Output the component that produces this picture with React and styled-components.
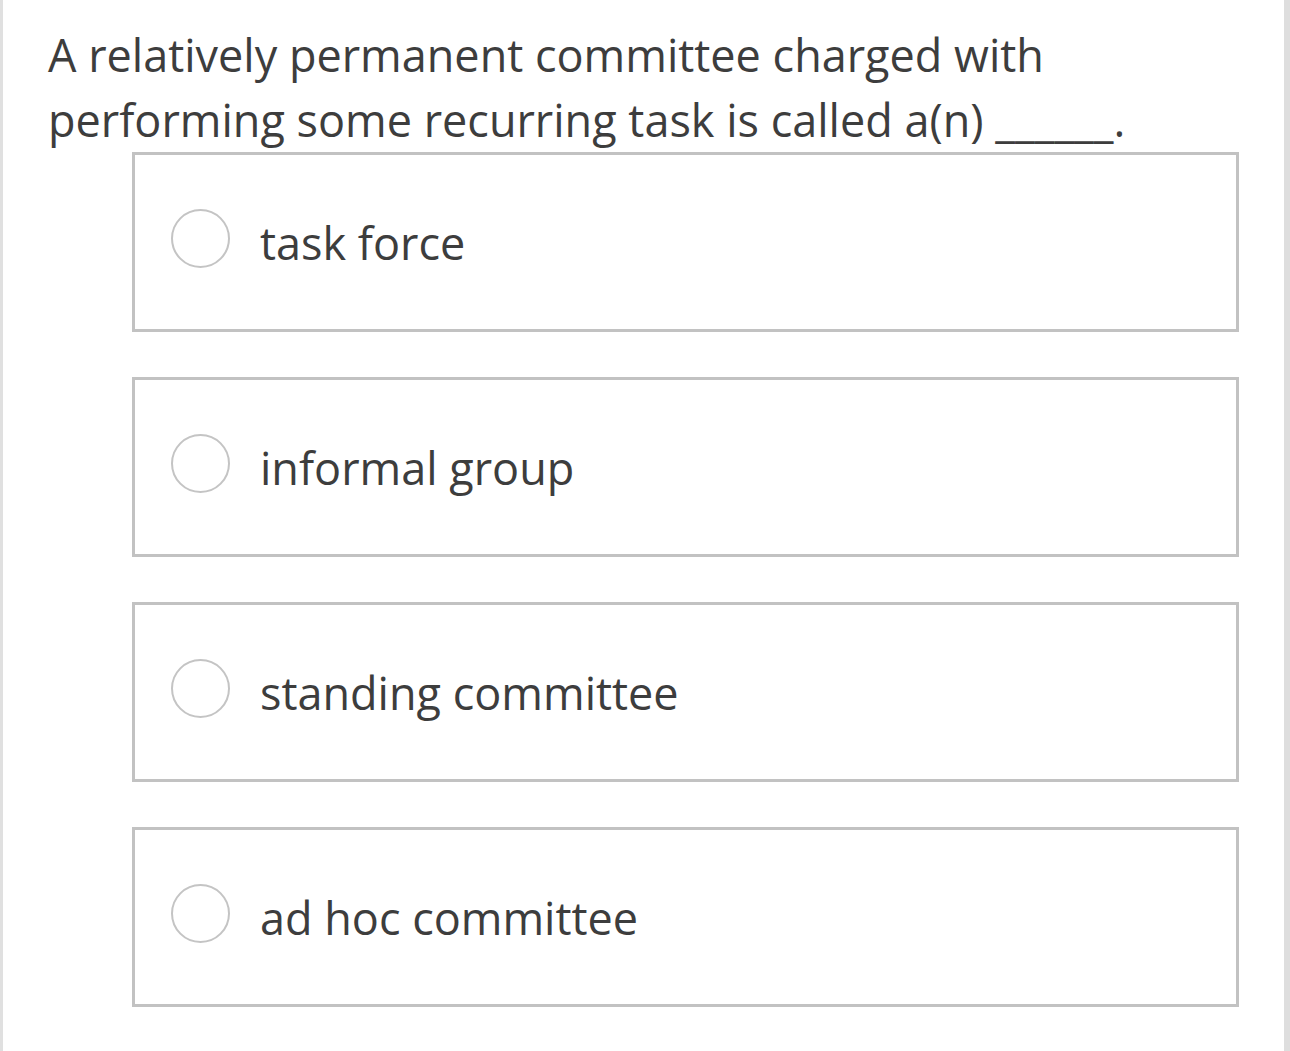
import React from "react";
import styled, { createGlobalStyle } from "styled-components";

const Global = createGlobalStyle`
  html, body { margin: 0; padding: 0; background: #ffffff; }
  body { font-family: "Open Sans", "Noto Sans", sans-serif; }
`;

const Page = styled.div`
  box-sizing: border-box;
  width: 1290px;
  min-height: 1051px;
  border-left: 3px solid #e0e0e0;
  border-right: 6px solid #dedede;
  background: #ffffff;
  padding: 22px 45px 44px 45px;
`;

const Question = styled.p`
  margin: 0;
  font-size: 45px;
  line-height: 65px;
  color: #3d3d3d;
`;

const Options = styled.div`
  display: flex;
  flex-direction: column;
  gap: 45px;
  padding-left: 84px;
`;

const Option = styled.label`
  box-sizing: border-box;
  height: 180px;
  border: 3px solid #c2c2c2;
  display: flex;
  align-items: center;
  gap: 30px;
  padding-left: 36px;
  cursor: pointer;
`;

const Radio = styled.span`
  box-sizing: border-box;
  width: 59px;
  height: 59px;
  margin-bottom: 7px;
  border-radius: 50%;
  border: 2.5px solid #c4c4c4;
  flex: none;
`;

const OptionText = styled.span`
  font-size: 45px;
  color: #3d3d3d;
  line-height: 1;
`;

const options = ["task force", "informal group", "standing committee", "ad hoc committee"];

export default function App() {
  return (
    <>
      <Global />
      <Page>
        <Question>
          A relatively permanent committee charged with performing some recurring task is called a(n) ______.
        </Question>
        <Options>
          {options.map((o) => (
            <Option key={o}>
              <Radio />
              <OptionText>{o}</OptionText>
            </Option>
          ))}
        </Options>
      </Page>
    </>
  );
}
